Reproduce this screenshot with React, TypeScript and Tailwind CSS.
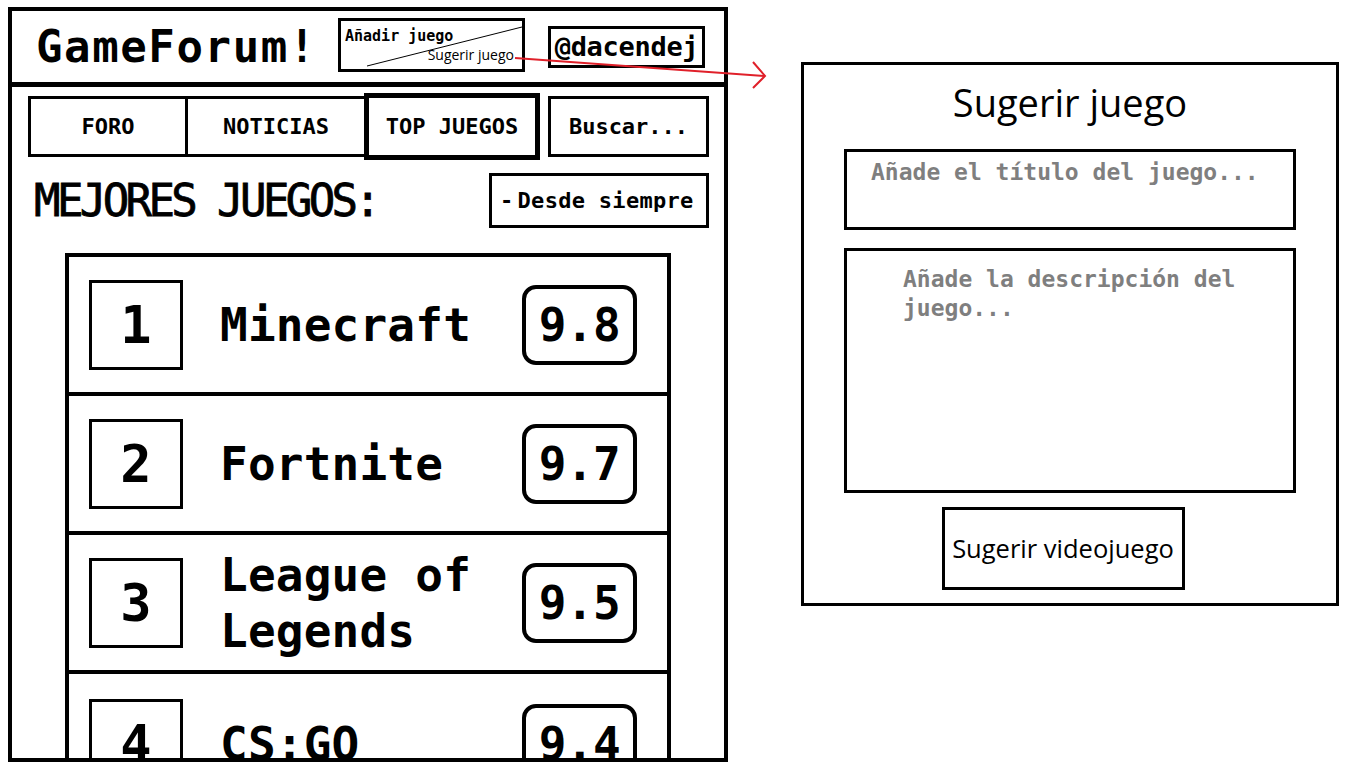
import React from 'react';

const mono = "font-['DejaVu_Sans_Mono','Liberation_Mono',monospace]";
const sans = "font-['Open_Sans','Noto_Sans',sans-serif]";

interface GameRowProps {
	rank: number;
	name: string;
	score: string;
	last?: boolean;
}

const GameRow = ({ rank, name, score, last }: GameRowProps) => {
	return (
		<div
			className={`flex h-[139px] shrink-0 items-center pl-[20px] pr-[30px] ${
				last ? '' : 'border-b-[4px] border-black'
			}`}
		>
			<div className="flex h-[90px] w-[94px] shrink-0 items-center justify-center border-[3px] border-black">
				<span className="text-[52px] font-bold leading-none">{rank}</span>
			</div>
			<div className="ml-[37px] flex-1 text-[46px] font-bold leading-[56px] tracking-[0.2px]">{name}</div>
			<div className="flex h-[80px] w-[115px] shrink-0 items-center justify-center rounded-[14px] border-[4px] border-black">
				<span className="text-[46px] font-bold leading-none tracking-[-0.5px]">{score}</span>
			</div>
		</div>
	);
};

const games = [
	{ rank: 1, name: 'Minecraft', score: '9.8' },
	{ rank: 2, name: 'Fortnite', score: '9.7' },
	{ rank: 3, name: 'League of Legends', score: '9.5' },
	{ rank: 4, name: 'CS:GO', score: '9.4' },
];

export default function App() {
	return (
		<div className={`relative flex h-[769px] w-[1361px] items-start overflow-hidden bg-white text-black ${mono}`}>
			{/* phone mockup, list runs past the bottom edge */}
			<div className="ml-[8px] mt-[7px] flex h-[755px] w-[720px] shrink-0 flex-col overflow-hidden border-[4px] border-black">
				<div className="flex h-[76px] shrink-0 items-center border-b-[5px] border-black">
					<div className="w-[326px] shrink-0 pl-[24px] text-[44px] font-bold leading-none tracking-[1.6px]">
						GameForum!
					</div>
					<div className="relative mb-[4px] h-[54px] w-[187px] shrink-0 border-[3px] border-black">
						<svg className="absolute inset-0" width="181" height="48" viewBox="0 0 181 48">
							<line x1="26" y1="45" x2="181" y2="6" stroke="black" strokeWidth="1" />
						</svg>
						<div className="absolute left-[4px] top-[8px] text-[15px] font-bold leading-none">Añadir juego</div>
						<div className={`absolute right-[8px] top-[27px] text-[14px] leading-none ${sans}`}>Sugerir juego</div>
					</div>
					<div className="ml-[23px] flex h-[42px] w-[157px] shrink-0 items-center justify-center border-[3px] border-black">
						<span className="text-[27px] font-bold leading-none tracking-[-0.3px]">@dacendej</span>
					</div>
				</div>

				<div className="mt-[6px] flex items-center pl-[16px]">
					<div className="flex h-[61px] w-[160px] items-center justify-center border-[3px] border-black text-[22px] font-bold">
						FORO
					</div>
					<div className="flex h-[61px] w-[176px] items-center justify-center border-y-[3px] border-black text-[22px] font-bold">
						NOTICIAS
					</div>
					<div className="flex h-[67px] w-[176px] items-center justify-center border-[5px] border-black text-[22px] font-bold">
						TOP JUEGOS
					</div>
					<div className="ml-[8px] flex h-[61px] w-[161px] items-center justify-center border-[3px] border-black text-[22px] font-bold">
						Buscar...
					</div>
				</div>

				<div className="mt-[13px] flex items-center justify-between pl-[22px] pr-[15px]">
					<div className="text-[44px] leading-none tracking-[-3.6px] [-webkit-text-stroke:0.8px_black]">MEJORES JUEGOS:</div>
					<div className="flex h-[55px] w-[220px] items-center border-[3px] border-black pl-[8px] text-[22px] font-bold tracking-[0.3px]">
						<span className="mr-[4px]">-</span>Desde siempre
					</div>
				</div>

				<div className="ml-[53px] mt-[25px] flex w-[606px] shrink-0 flex-col border-[4px] border-black">
					{games.map((g, i) => (
						<GameRow key={g.rank} rank={g.rank} name={g.name} score={g.score} last={i === games.length - 1} />
					))}
				</div>
			</div>

			{/* suggest game panel */}
			<div className="ml-[73px] mt-[62px] flex h-[544px] w-[538px] shrink-0 flex-col items-center border-[3px] border-black">
				<div className={`mt-[18px] text-[38px] leading-none ${sans}`}>Sugerir juego</div>
				<textarea
					className="mt-[28px] h-[81px] w-[452px] resize-none border-[3px] border-black pl-[24px] pt-[3px] text-[23px] font-bold outline-none placeholder:text-[#7f7f7f]"
					placeholder="Añade el título del juego..."
				/>
				<textarea
					className="mt-[18px] h-[245px] w-[452px] resize-none border-[3px] border-black pl-[56px] pr-[20px] pt-[14px] text-[23px] font-bold leading-[29px] outline-none placeholder:text-[#7f7f7f]"
					placeholder="Añade la descripción del juego..."
				/>
				<button
					className={`mr-[14px] mt-[14px] flex h-[83px] w-[243px] items-center justify-center border-[3px] border-black text-[25.5px] ${sans}`}
				>
					Sugerir videojuego
				</button>
			</div>

			{/* connector arrow */}
			<svg className="pointer-events-none absolute left-0 top-0" width="1361" height="769" viewBox="0 0 1361 769">
				<line x1="515" y1="58" x2="765" y2="76" stroke="#e0202a" strokeWidth="2" />
				<polyline points="753,62 765,76 753,88" fill="none" stroke="#e0202a" strokeWidth="2" />
			</svg>
		</div>
	);
}
